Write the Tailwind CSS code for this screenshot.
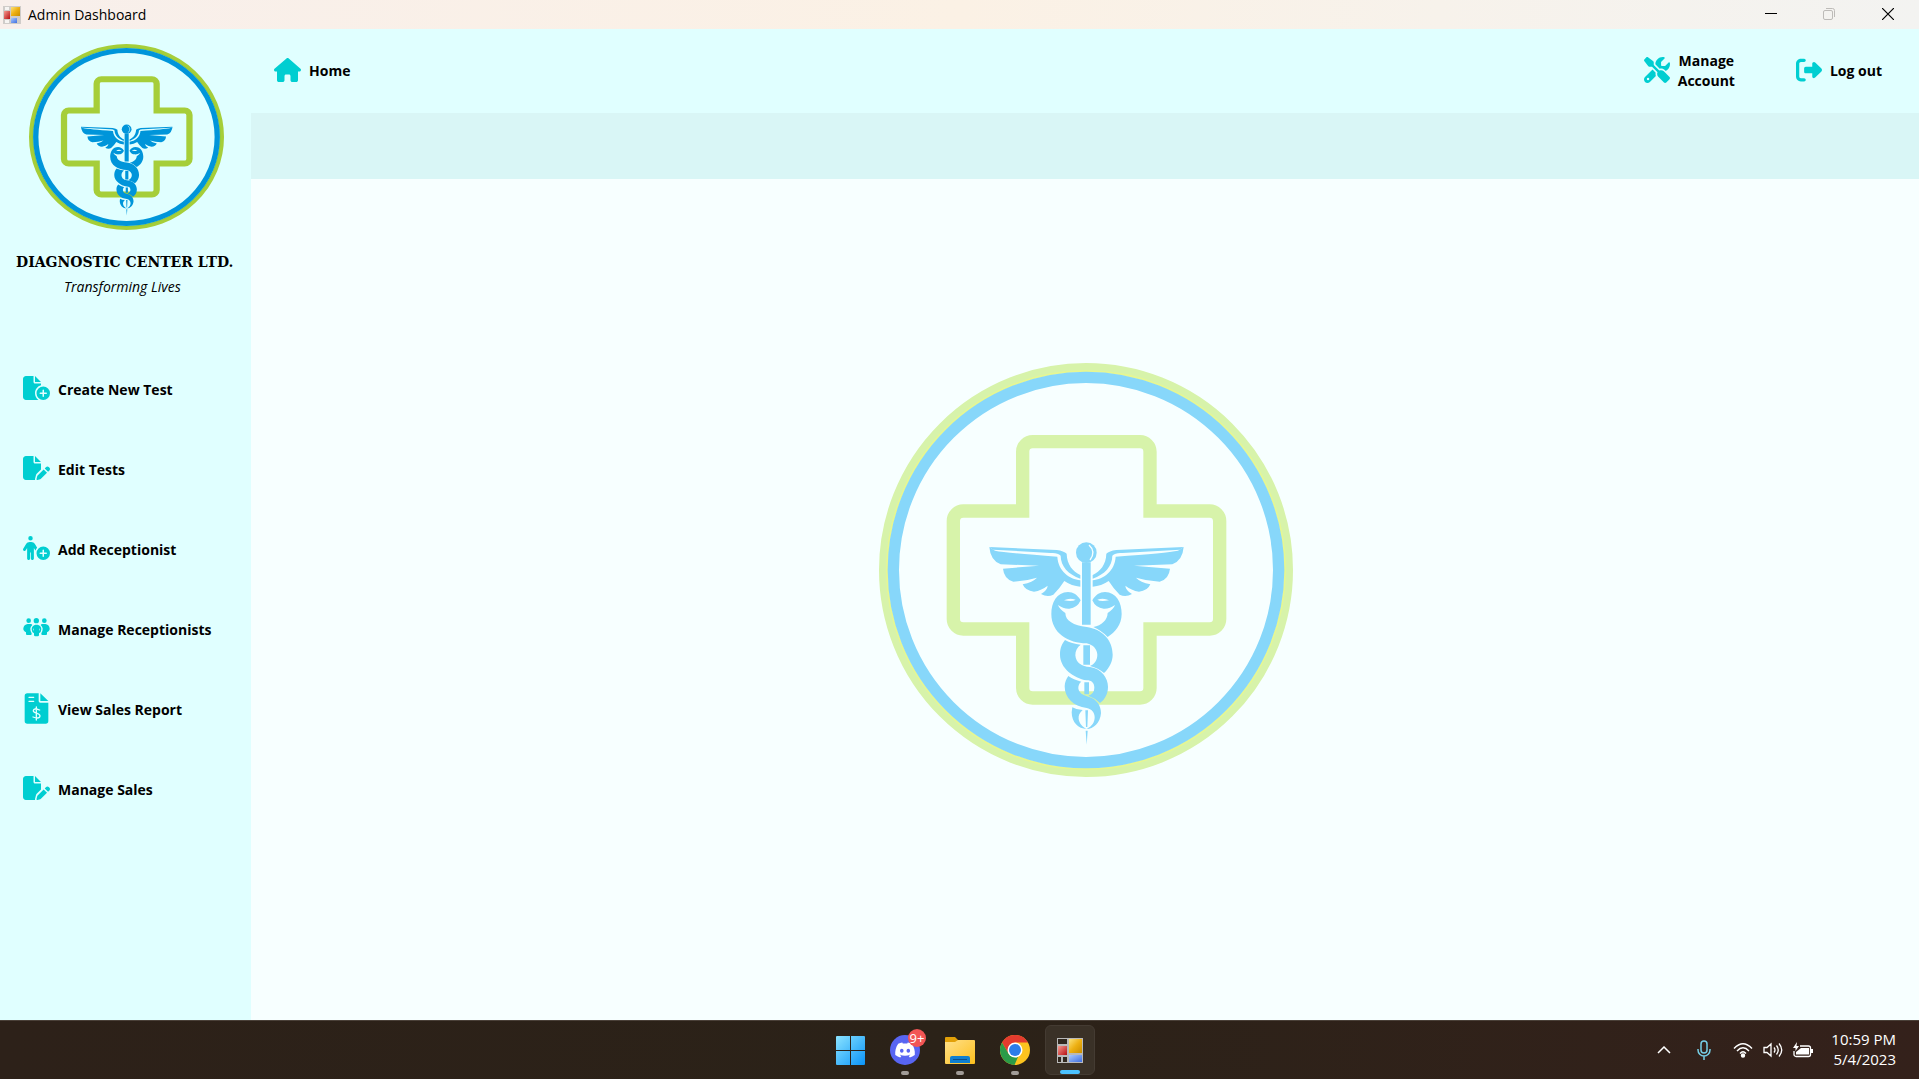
<!DOCTYPE html>
<html lang="en">
<head>
<meta charset="utf-8">
<title>Admin Dashboard</title>
<script src="https://cdn.jsdelivr.net/npm/@tailwindcss/browser@4"></script>
</head>
<body class="flex h-screen flex-col overflow-hidden bg-[#f7ffff] font-['Open_Sans','Noto_Sans',sans-serif] text-black">

<!-- Shared symbols -->
<svg class="absolute size-0" aria-hidden="true">
  <symbol id="logo" viewBox="57 40 1242 1242" preserveAspectRatio="none">
    <circle cx="678" cy="661" r="608" fill="none" stroke="var(--color-lime)" stroke-width="26"/>
    <circle cx="678" cy="661" r="597" fill="none" stroke="var(--color-edge)" stroke-width="6"/>
    <circle cx="678" cy="661" r="578" fill="none" stroke="var(--color-blue)" stroke-width="34"/>
    <path fill="none" stroke="var(--color-lime)" stroke-width="40" d="M488 484V306a30 30 0 0 1 30-30H840a30 30 0 0 1 30 30V484H1049a30 30 0 0 1 30 30V808a30 30 0 0 1-30 30H870V1015a30 30 0 0 1-30 30H518a30 30 0 0 1-30-30V838H310a30 30 0 0 1-30-30V514a30 30 0 0 1 30-30Z"/>
    <g fill="var(--color-blue)">
      <circle cx="679" cy="609" r="31"/>
      <path fill="none" stroke="var(--color-base)" stroke-width="4" d="M687 586Q709 606 690 631"/>
      <path d="M666 638H692V825H666ZM670 887H690V945H670ZM673 998H687V1034H673ZM676 1082H684L682 1132H678ZM677 1143H683L680 1185Z"/>
      <g id="wing">
        <path d="M388 592L590 601Q612 604 620 612C621 645 638 665 661 676V687C625 674 602 650 602 618Q592 608 572 610L400 600Z"/>
        <path d="M388 592L405 603Q440 610 592 621C595 665 628 688 661 692V711Q635 709 613 694Q600 715 580 735Q562 744 543 733Q562 722 563 708Q545 722 522 726Q496 724 488 704Q518 698 531 684Q498 694 460 696Q432 688 429 657L537 648L422 644Q391 632 388 592Z"/>
      </g>
      <use href="#wing" transform="translate(1359 0) scale(-1 1)"/>
      <path fill-rule="evenodd" d="M662 752C652 735 640 727 624 727C590 728 574 758 574 793C574 850 625 881 680 881C700 885 712 900 712 915C712 932 702 944 690 949Q715 955 732 970C748 955 758 935 758 915C758 870 725 838 680 832C640 826 617 815 616 790Q598 778 594 766Q610 778 628 777Q652 775 662 752ZM612 752Q628 743 647 750Q638 757 612 752Z"/>
      <path fill-rule="evenodd" d="M697 752C707 735 719 727 735 727C769 728 785 758 785 793C785 825 765 848 743 862Q725 843 700 832C725 827 742 812 743 790Q761 778 765 766Q749 778 731 777Q707 775 697 752ZM747 752Q731 743 712 750Q721 757 747 752Z"/>
      <path d="M615 871Q635 882 662 885C652 892 646 903 646 917C648 940 665 951 690 952C725 957 744 985 744 1012C744 1035 732 1052 720 1060Q705 1045 685 1038C697 1034 703 1026 703 1014C703 1000 695 992 680 992C640 985 600 955 600 915C600 895 606 882 615 871Z"/>
      <path d="M625 979Q640 990 664 996C657 1001 655 1008 655 1016C657 1030 668 1037 685 1041C712 1048 723 1070 723 1090C721 1120 700 1138 680 1138C696 1130 704 1118 704 1103C704 1088 695 1078 680 1075C640 1070 614 1045 614 1010C614 998 619 987 625 979Z"/>
      <path d="M637 1073Q650 1081 668 1081C658 1090 655 1098 656 1108C658 1122 668 1132 680 1138C655 1138 635 1118 635 1088Z"/>
    </g>
  </symbol>
  <symbol id="file-pen" viewBox="0 0 576 512"><path d="M0 64C0 28.7 28.7 0 64 0H224V128c0 17.7 14.3 32 32 32H384V285.7l-86.8 86.8c-10.3 10.3-17.5 23.1-21 37.2l-18.7 74.9c-2.3 9.2-1.8 18.8 1.3 27.5H64c-35.3 0-64-28.7-64-64V64zm384 64H256V0L384 128zM549.8 235.7l14.4 14.4c15.6 15.6 15.6 40.9 0 56.6l-29.4 29.4-71-71 29.4-29.4c15.6-15.6 40.9-15.6 56.6 0zM311.9 417L441.1 287.8l71 71L382.9 487.9c-4.1 4.1-9.2 7-14.9 8.4l-60.1 15c-5.5 1.4-11.2-.2-15.2-4.2s-5.6-9.7-4.2-15.2l15-60.1c1.4-5.6 4.3-10.8 8.4-14.9z"/></symbol>
  <symbol id="forms" viewBox="0 0 26 25">
    <path fill="#b9b9b9" d="M0 0H26V25H0Z"/>
    <path fill="#30281f" d="M1 1H10V6H1ZM1 19H4V24H1ZM6 19H10V24H6Z"/>
    <path fill="url(#g-red)" d="M1 8H10V17H1Z"/>
    <path fill="url(#g-gold)" d="M12 1H25V15H12Z"/>
    <path fill="url(#g-blue)" d="M12 17H25V24H12Z"/>
  </symbol>
  <defs>
    <linearGradient id="g-red" x2="1" y2="1"><stop stop-color="#f59a90"/><stop offset="1" stop-color="#b80f12"/></linearGradient>
    <linearGradient id="g-gold" x2="1" y2="1"><stop stop-color="#fbe27a"/><stop offset=".5" stop-color="#eeb012"/><stop offset="1" stop-color="#c98d00"/></linearGradient>
    <linearGradient id="g-blue" x2="1" y2="1"><stop stop-color="#a8c8ff"/><stop offset="1" stop-color="#3f6fe0"/></linearGradient>
    <linearGradient id="g-win" x2="1" y2="1"><stop stop-color="#8be3ff"/><stop offset="1" stop-color="#0a94f8"/></linearGradient>
    <linearGradient id="g-folder" x2="1" y2="1"><stop stop-color="#ffe08a"/><stop offset="1" stop-color="#fcbf1c"/></linearGradient>
  </defs>
</svg>

<!-- Title bar -->
<header class="flex h-[29px] shrink-0 items-center justify-between bg-linear-to-r from-[#f8efeb] via-[#fbf1e5] to-[#f3f3f1]">
  <div class="flex items-center gap-[7px] pl-[3px]">
    <svg class="size-[18px]" viewBox="0 0 18 18"><rect width="18" height="18" fill="#cfccc9"/><path fill="#f6f4f2" d="M2 1H6V4H2ZM2 14H6V17H2Z"/><rect x="1" y="5" width="6" height="8" fill="url(#g-red)"/><rect x="8" y="1" width="9" height="9" fill="url(#g-gold)"/><rect x="8" y="12" width="6" height="5" fill="url(#g-blue)"/></svg>
    <h1 class="text-[14px] leading-5">Admin Dashboard</h1>
  </div>
  <div class="flex h-full pr-px pb-px">
    <button class="grid w-[58px] place-items-center" aria-label="Minimize"><svg class="size-3" viewBox="0 0 12 12" stroke="#000"><path d="M0 5.500H12"/></svg></button>
    <button class="grid w-[58px] place-items-center" aria-label="Restore" disabled><svg class="size-3" viewBox="0 0 12 12" fill="none" stroke="#bdbbb8"><rect x=".5" y="2.500" width="9" height="9" rx="1.500"/><path d="M3 .5H9.500A2 2 0 0 1 11.500 2.500V9"/></svg></button>
    <button class="grid w-[60px] place-items-center" aria-label="Close"><svg class="size-3" viewBox="0 0 12 12" stroke="#000" stroke-width="1.200"><path d="M0 0L12 12M12 0L0 12"/></svg></button>
  </div>
</header>

<div class="flex min-h-0 flex-1">
  <!-- Sidebar -->
  <aside class="w-[251px] shrink-0 bg-[#e0ffff] pt-[15px]">
    <svg class="ml-[29px] h-[186px] w-[195px] [--color-base:#e0ffff] [--color-blue:#0095da] [--color-edge:#8ccb3c] [--color-lime:#a6ce39]" role="img" aria-label="Diagnostic Center logo"><use href="#logo"/></svg>
    <p class="mt-[22px] pl-4 font-['DejaVu_Serif',serif] text-[14px] leading-5 font-bold whitespace-nowrap">DIAGNOSTIC CENTER LTD.</p>
    <p class="mt-[5px] pl-16 text-[14px] leading-5 italic">Transforming Lives</p>
    <nav class="mt-[52px] flex flex-col text-[14px] font-bold text-black [&_svg]:mb-0.5 [&_svg]:fill-[#00ced1]">
      <button class="flex h-20 items-center gap-2 pl-[23px]"><svg class="h-6 w-[27px]" viewBox="0 0 576 512"><path d="M0 64C0 28.7 28.7 0 64 0H224V128c0 17.7 14.3 32 32 32H384v38.6C310.1 219.5 256 287.4 256 368c0 59.1 29.1 111.3 73.7 143.3c-3.2 .5-6.4 .7-9.7 .7H64c-35.3 0-64-28.7-64-64V64zm384 64H256V0L384 128zm48 96a144 144 0 1 1 0 288 144 144 0 1 1 0-288zm16 80c0-8.8-7.2-16-16-16s-16 7.2-16 16v48H368c-8.8 0-16 7.2-16 16s7.2 16 16 16h48v48c0 8.800 7.200 16 16 16s16-7.200 16-16V384h48c8.800 0 16-7.200 16-16s-7.200-16-16-16H448V304z"/></svg>Create New Test</button>
      <button class="flex h-20 items-center gap-2 pl-[23px]"><svg class="h-6 w-[27px]"><use href="#file-pen"/></svg>Edit Tests</button>
      <button class="flex h-20 items-center gap-2 pl-[23px]"><svg class="h-6 w-[27px]" viewBox="0 0 576 512"><path d="M112 48a48 48 0 1 1 96 0 48 48 0 1 1 -96 0zm40 304V480c0 17.7-14.3 32-32 32s-32-14.3-32-32V256.9L59.4 304.5c-9.1 15.1-28.8 20-43.9 10.9s-20-28.8-10.9-43.9l58.3-97c17.4-28.9 48.6-46.6 82.3-46.6h29.7c33.7 0 64.9 17.7 82.3 46.6l44.9 74.7c-16.1 17.6-28.6 38.5-36.6 61.5c-1.9-1.8-3.5-3.9-4.9-6.3L232 256.9V480c0 17.7-14.3 32-32 32s-32-14.3-32-32V352H152zM432 224a144 144 0 1 1 0 288 144 144 0 1 1 0-288zm16 80c0-8.8-7.2-16-16-16s-16 7.2-16 16v48H368c-8.8 0-16 7.2-16 16s7.2 16 16 16h48v48c0 8.8 7.2 16 16 16s16-7.2 16-16V384h48c8.8 0 16-7.2 16-16s-7.2-16-16-16H448V304z"/></svg>Add Receptionist</button>
      <button class="flex h-20 items-center gap-2 pl-[23px]"><svg class="h-6 w-[27px]" viewBox="0 0 81 72"><circle cx="17" cy="14" r="7"/><circle cx="40" cy="14" r="8"/><circle cx="64" cy="14" r="7"/><path d="M14 24H23Q27 24 28 27Q17 36 26 52V54Q26 57 23 57H12Q9 57 9 54V49Q0 45 1 37Q3 25 14 24ZM67 24H58Q54 24 53 27Q64 36 55 52V54Q55 57 58 57H69Q72 57 72 54V49Q81 45 80 37Q78 25 67 24Z"/><path fill-rule="evenodd" d="M37 26H44Q55 29 55 40Q55 48 48 52V57Q48 61 44 61H37Q33 61 33 57V52Q26 48 26 40Q26 29 37 26ZM33 36Q29 40 33 45ZM48 36V45Q52 40 48 36Z"/></svg>Manage Receptionists</button>
      <button class="flex h-20 items-center gap-2 pl-[23px]"><svg class="h-[31px] w-[27px]" viewBox="-5 0 81 93"><path d="M8 1H42V24Q42 29 47 29H71V84Q71 92 63 92H8Q0 92 0 84V9Q0 1 8 1ZM47 1L71 24H47Z"/><g fill="none" stroke="#e0ffff" stroke-width="4" stroke-linecap="round"><path d="M13 13H27M13 25H27M35 42V81M45 51Q27 44 26 53C26 62 46 59 46 69C45 78 33 75 25 72"/></g></svg>View Sales Report</button>
      <button class="flex h-20 items-center gap-2 pl-[23px]"><svg class="h-6 w-[27px]"><use href="#file-pen"/></svg>Manage Sales</button>
    </nav>
  </aside>

  <!-- Content -->
  <div class="flex min-w-0 flex-1 flex-col">
    <div class="flex h-[84px] shrink-0 items-center justify-between bg-[#e0ffff] pr-[37px] pl-[23px] text-[14px] leading-5 font-bold [&_svg]:mb-0.5 [&_svg]:fill-[#00ced1]">
      <button class="flex items-center gap-2"><svg class="h-6 w-[27px]" viewBox="0 0 576 512"><path d="M575.8 255.5c0 18-15 32.1-32 32.1h-32l.7 160.2c0 2.7-.2 5.4-.5 8.1V472c0 22.1-17.9 40-40 40H456c-1.1 0-2.2 0-3.3-.1c-1.4 .1-2.8 .1-4.2 .1H416 392c-22.1 0-40-17.9-40-40V448 384c0-17.7-14.3-32-32-32H256c-17.7 0-32 14.3-32 32v64 24c0 22.1-17.9 40-40 40H160 128.100c-1.500 0-3-.1-4.500-.2c-1.200 .1-2.400 .2-3.600 .2H104c-22.100 0-40-17.900-40-40V360c0-.9 0-1.900 .1-2.800V287.600H32c-18 0-32-14-32-32.100c0-9 3-17 10-24L266.400 8c7-7 15-8 22-8s15 2 21 7L564.800 231.500c8 7 12 15 11 24z"/></svg>Home</button>
      <div class="flex items-center gap-[61px]">
        <button class="flex items-center gap-2"><svg class="size-[26px]" viewBox="0 0 512 512"><path d="M78.6 5C69.1-2.4 55.6-1.5 47 7L7 47c-8.5 8.5-9.4 22-2.1 31.6l80 104c4.5 5.9 11.6 9.4 19 9.4h54.1l109 109c-14.7 29-10 65.4 14.3 89.6l112 112c12.5 12.5 32.8 12.5 45.3 0l64-64c12.5-12.5 12.5-32.8 0-45.3l-112-112c-24.2-24.2-60.6-29-89.6-14.3l-109-109V104c0-7.5-3.5-14.5-9.4-19L78.6 5zM19.9 396.1C7.2 408.8 0 426.1 0 444.1C0 481.6 30.4 512 67.9 512c18 0 35.3-7.2 48-19.9L233.7 374.3c-7.8-20.9-9-43.6-3.6-65.1l-61.7-61.7L19.9 396.1zM512 144c0-10.5-1.1-20.7-3.2-30.5c-2.4-11.2-16.1-14.1-24.2-6l-63.9 63.9c-3 3-7.1 4.7-11.3 4.7H352c-8.8 0-16-7.2-16-16V102.6c0-4.2 1.7-8.3 4.7-11.3l63.9-63.9c8.1-8.1 5.2-21.8-6-24.2C388.7 1.1 378.5 0 368 0C288.5 0 224 64.5 224 144l0 .8 85.3 85.3c36-9.1 75.8 .5 104 28.7L429 274.5c49-23 83-72.8 83-130.5zM56 432a24 24 0 1 1 48 0 24 24 0 1 1 -48 0z"/></svg><span>Manage<br>Account</span></button>
        <button class="flex items-center gap-2"><svg class="size-[26px]" viewBox="0 0 512 512"><path d="M377.9 105.9L500.7 228.7c7.2 7.2 11.3 17.1 11.3 27.3s-4.1 20.1-11.3 27.3L377.9 406.1c-6.4 6.4-15 9.9-24 9.9c-18.7 0-33.9-15.2-33.9-33.9l0-62.1-128 0c-17.7 0-32-14.3-32-32l0-64c0-17.700 14.300-32 32-32l128 0 0-62.100c0-18.700 15.200-33.900 33.900-33.900c9 0 17.600 3.600 24 9.900zM160 96L96 96c-17.700 0-32 14.300-32 32l0 256c0 17.700 14.300 32 32 32l64 0c17.700 0 32 14.300 32 32s-14.300 32-32 32l-64 0c-53 0-96-43-96-96L0 128C0 75 43 32 96 32l64 0c17.700 0 32 14.300 32 32s-14.300 32-32 32z"/></svg>Log out</button>
      </div>
    </div>
    <div class="h-[66px] shrink-0 bg-[#d9f6f6]"></div>
    <main class="grid min-h-0 flex-1 place-items-center pb-[60px] pl-0.5">
      <svg class="size-[414px] [--color-base:#f7ffff] [--color-blue:#87d7fa] [--color-edge:#e6f792] [--color-lime:#d7f3aa]" role="img" aria-label="Diagnostic Center emblem"><use href="#logo"/></svg>
    </main>
  </div>
</div>

<!-- Taskbar -->
<footer class="grid h-[59px] shrink-0 grid-cols-[1fr_auto_1fr] items-center border-t border-[#4a4038] bg-linear-to-r from-[#2d2119] via-[#2b2218] to-[#34211b]">
  <span></span>
  <div class="flex gap-[5px] pl-px">
    <button class="relative grid size-[50px] place-items-center" aria-label="Start"><svg class="size-[29px]" viewBox="0 0 29 29" fill="url(#g-win)"><path d="M1 0H14V14H0V1Q0 0 1 0ZM15 0H28Q29 0 29 1V14H15ZM0 15H14V29H1Q0 29 0 28ZM15 15H29V28Q29 29 28 29H15Z"/></svg></button>
    <button class="relative grid size-[50px] place-items-center" aria-label="Discord">
      <svg class="size-[30px]" viewBox="0 0 30 30"><circle cx="15" cy="15" r="15" fill="#5865f2"/><path transform="translate(5.200 5.200) scale(.82)" fill="#fff" d="M20.317 4.3698a19.7913 19.7913 0 00-4.8851-1.5152.0741.0741 0 00-.0785.0371c-.211.3753-.4447.8648-.6083 1.2495-1.8447-.2762-3.68-.2762-5.4868 0-.1636-.3933-.4058-.8742-.6177-1.2495a.077.077 0 00-.0785-.037 19.7363 19.7363 0 00-4.8852 1.515.0699.0699 0 00-.0321.0277C.5334 9.0458-.319 13.5799.0992 18.0578a.0824.0824 0 00.0312.0561c2.0528 1.5076 4.0413 2.4228 5.9929 3.0294a.0777.0777 0 00.0842-.0276c.4616-.6304.8731-1.2952 1.226-1.9942a.076.076 0 00-.0416-.1057c-.6528-.2476-1.2743-.5495-1.8722-.8923a.077.077 0 01-.0076-.1277c.1258-.0943.2517-.1923.3718-.2914a.0743.0743 0 01.0776-.0105c3.9278 1.7933 8.18 1.7933 12.0614 0a.0739.0739 0 01.0785.0095c.1202.099.246.1981.3728.2924a.077.077 0 01-.0066.1276 12.2986 12.2986 0 01-1.873.8914.0766.0766 0 00-.0407.1067c.3604.698.7719 1.3628 1.225 1.9932a.076.076 0 00.0842.0286c1.961-.6067 3.9495-1.5219 6.0023-3.0294a.077.077 0 00.0313-.0552c.5004-5.177-.8382-9.6739-3.5485-13.6604a.061.061 0 00-.0312-.0286zM8.02 15.3312c-1.1825 0-2.1569-1.0857-2.1569-2.419 0-1.3332.9555-2.4189 2.157-2.4189 1.2108 0 2.1757 1.0952 2.1568 2.419 0 1.3332-.9555 2.4189-2.1569 2.4189zm7.9748 0c-1.1825 0-2.1569-1.0857-2.1569-2.419 0-1.3332.9554-2.4189 2.1569-2.4189 1.2108 0 2.1757 1.0952 2.1568 2.419 0 1.3332-.946 2.4189-2.1568 2.4189z"/></svg>
      <span class="absolute top-1 right-1 grid size-[18px] place-items-center rounded-full bg-[#f25555] text-[13px] leading-none text-white">9+</span>
      <span class="absolute bottom-0 h-1 w-2 rounded-full bg-[#a29c97]"></span>
    </button>
    <button class="relative grid size-[50px] place-items-center" aria-label="File Explorer"><svg class="h-[27px] w-[30px]" viewBox="0 0 30 27"><path fill="#e2a008" d="M0 1Q0 0 1 0H10L13 3V6H0Z"/><path fill="url(#g-folder)" d="M0 5H10L13 3H29Q30 3 30 4V26Q30 27 29 27H1Q0 27 0 26Z"/><path fill="#0f7fd0" d="M5 26V21Q5 19 7 19H23Q25 19 25 21V26Z"/><path stroke="#0a4f8c" d="M8 22.500H22"/></svg><span class="absolute bottom-0 h-1 w-2 rounded-full bg-[#a29c97]"></span></button>
    <button class="relative grid size-[50px] place-items-center" aria-label="Chrome"><svg class="size-[30px]" viewBox="0 0 30 30"><circle cx="15" cy="15" r="15" fill="#fcc31e"/><path fill="#e33b2e" d="M2 7.500A15 15 0 0 1 28 7.500H15L8.500 18.700Z"/><path fill="#2a9b48" d="M2 7.500L8.600 18.700Q12 23 18 22L14.500 30A15 15 0 0 1 2 7.500Z"/><circle cx="15" cy="15" r="7.500" fill="#fff"/><circle cx="15" cy="15" r="6" fill="#2b7de9"/></svg><span class="absolute bottom-0 h-1 w-2 rounded-full bg-[#a29c97]"></span></button>
    <button class="relative grid size-[50px] place-items-center rounded-md border border-[#443b32] bg-[#3a3127]" aria-label="Admin Dashboard"><svg class="h-[25px] w-[26px]"><use href="#forms"/></svg><span class="absolute bottom-0 h-1 w-5 rounded-full bg-[#4cc2ff]"></span></button>
  </div>
  <div class="flex items-center justify-end pr-[23px] pb-px text-white">
    <button class="mr-[26px]" aria-label="Show hidden icons"><svg class="h-2 w-[14px]" viewBox="0 0 14 8" fill="none" stroke="#fff" stroke-width="1.500"><path d="M1 7L7 1L13 7"/></svg></button>
    <button class="mr-[22px]" aria-label="Microphone"><svg class="h-5 w-[14px]" viewBox="0 0 14 20" fill="none" stroke="#76cfe6" stroke-width="1.500"><rect x="4" y="1" width="6" height="12" rx="3"/><path d="M1 9V10A6 6 0 0 0 13 10V9M7 16V20"/></svg></button>
    <button class="mr-[18px] flex items-center gap-[10px]" aria-label="Network, volume and battery">
      <svg class="h-4 w-5" viewBox="0 0 20 16" fill="none" stroke="#fff" stroke-width="1.400"><path d="M1 6.500Q10-3 19 6.500M4 9Q10 2.500 16 9M7 11.500Q10 8 13 11.500"/><circle cx="10" cy="13.500" r="1.500" fill="#fff"/></svg>
      <svg class="h-4 w-5" viewBox="0 0 20 16" fill="none" stroke="#fff" stroke-width="1.300"><path d="M1 5.500H4L8 2V14L4 10.500H1ZM11 5.500Q13 8 11 10.500M13.500 3.500Q17 8 13.500 12.500M16 1.500Q21.500 8 16 14.500"/></svg>
      <svg class="h-4 w-5" viewBox="0 0 20 16"><path fill="none" stroke="#fff" stroke-width="1.300" d="M7 4H15.500A2 2 0 0 1 17.500 6V12.500A2 2 0 0 1 15.500 14.500H3A2 2 0 0 1 1 12.500V9"/><path fill="#fff" d="M8 6H16V12.500H3V10ZM18 7H20V11H18ZM4 0L0 6H2.500V9L6 4H3.500Z"/></svg>
    </button>
    <time class="pb-px text-right text-[15px] leading-5" datetime="2023-05-04T22:59">10:59 PM<br>5/4/2023</time>
  </div>
</footer>
</body>
</html>
